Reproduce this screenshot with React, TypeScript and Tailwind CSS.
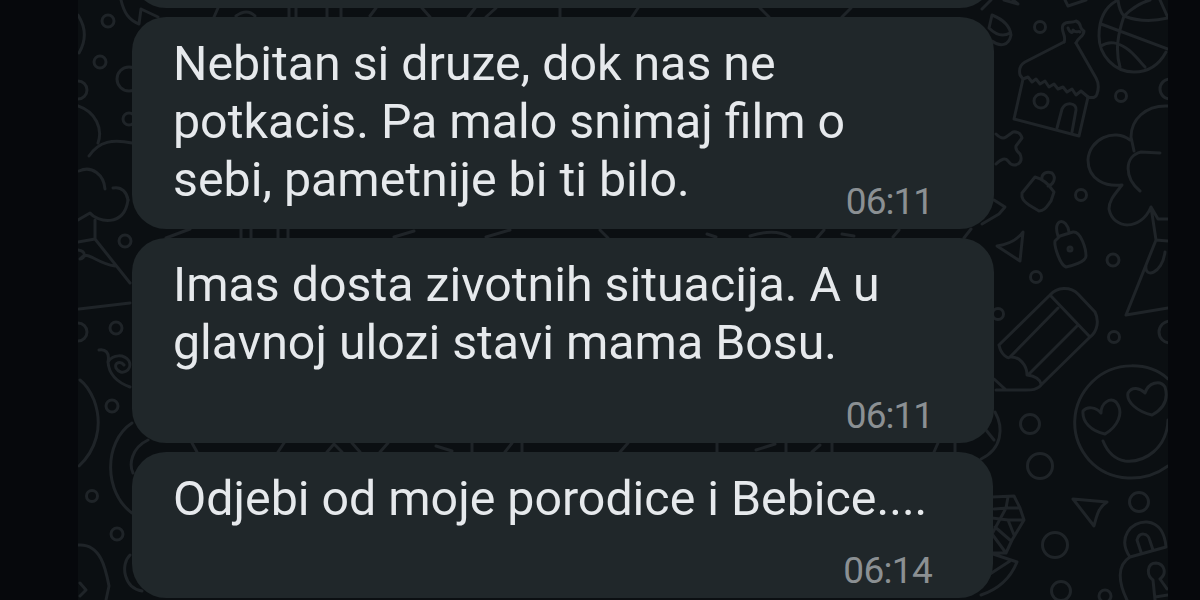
interface Message {
  id: number;
  lines: string[];
  time: string;
  sizeClass: string;
  timeClass: string;
}

const messages: Message[] = [
  {
    id: 1,
    lines: ["Nebitan si druze, dok nas ne", "potkacis. Pa malo snimaj film o", "sebi, pametnije bi ti bilo."],
    time: "06:11",
    sizeClass: "h-[212px] w-[862px]",
    timeClass: "tracking-[-1px]",
  },
  {
    id: 2,
    lines: ["Imas dosta zivotnih situacija. A u", "glavnoj ulozi stavi mama Bosu."],
    time: "06:11",
    sizeClass: "h-[205px] w-[862px]",
    timeClass: "tracking-[-1px]",
  },
  {
    id: 3,
    lines: ["Odjebi od moje porodice i Bebice...."],
    time: "06:14",
    sizeClass: "h-[146px] w-[861px]",
    timeClass: "tracking-[-0.7px]",
  },
];

// x, y, radius
const dots: [number, number, number][] = [
  [1040, 27, 5.5], [1121, 96, 5.5], [1081, 195, 5.5], [1113, 260, 6], [1036, 277, 5.5],
  [1114, 337, 5.5], [998, 314, 5.5], [1030, 424, 9.5], [1040, 466, 12.5], [1139, 502, 9.5],
  [1055, 545, 12.5], [1061, 591, 9.5], [1105, 596, 6], [1041, 101, 7], [1170, 89, 10],
  [1170, 332, 11], [108, 21, 6], [100, 62, 6], [78, 90, 9], [129, 79, 12], [129, 119, 6],
  [125, 241, 6], [116, 328, 6], [78, 332, 9], [112, 406, 6], [92, 496, 5.5], [117, 534, 6],
  [1070, 249, 2],
];

function Wallpaper() {
  return (
    <svg
      aria-hidden="true"
      viewBox="78 0 1090 600"
      className="absolute inset-0 h-full w-full"
      fill="none"
      stroke="#1f2428"
      strokeWidth="3"
      strokeLinecap="round"
      strokeLinejoin="round"
    >
      {dots.map(([x, y, r]) => (
        <circle key={`${x}-${y}`} cx={x} cy={y} r={r} />
      ))}

      {/* basketball */}
      <path d="M1166 52C1158 67 1146 72 1134 72C1114 72 1099 55 1099 36C1099 18 1106 6 1118 0M1160 0L1168 18C1152 22 1137 21 1124 16M1118 0C1119 8 1121 13 1124 16C1132 8 1140 3 1150 0M1101 24L1168 49M1124 16C1118 34 1115 50 1120 67M1101 46C1110 40 1118 43 1126 48C1134 53 1138 60 1145 67" />
      {/* house */}
      <path d="M1064 42L1025 62Q1018 66 1020 75L1023 79L1014 119L1079 136L1088 97Q1096 99 1097 94Q1100 85 1096 78L1076 43" />
      <path d="M1064 42C1067 36 1060 31 1063 25C1067 20 1071 24 1076 21C1083 24 1078 28 1084 31C1084 37 1078 37 1076 43M1068 28C1070 33 1073 34 1073 30C1076 34 1079 30 1080 32" />
      <path d="M1023 79L1028 77L1032 82L1036 79L1040 84L1045 81L1049 87L1054 84L1058 89L1063 87L1067 92L1072 89L1076 95L1081 91L1088 97M1057 128L1062 109C1066 101 1077 103 1076 110L1072 132" />
      {/* bell, scraps along the top */}
      <path d="M992 15C1002 19 1010 26 1011 35C1009 46 1000 47 992 41M992 15L989 28C996 35 1003 37 1010 33M982 9L991 0M1004 0L1018 4L1013 0M1065 0L1068 6L1086 0" />
      {/* cross */}
      <path d="M996 134Q1002 140 1006 137L1013 132Q1020 131 1022 138L1016 146Q1015 150 1020 154Q1023 161 1018 164Q1012 167 1008 161Q1004 156 996 164" />
      {/* padlocks */}
      <path d="M1035 177L1022 193C1021 199 1024 201 1029 205L1039 211C1045 211 1047 206 1051 201L1054 192C1050 186 1044 179 1035 177ZM1042 180C1041 173 1047 171 1052 173C1057 178 1053 185 1048 186" />
      <path d="M1060 236L1073 232C1081 231 1086 249 1086 256C1086 262 1071 266 1066 267C1060 265 1054 246 1055 241ZM1058 236C1052 218 1067 217 1069 232" />
      {/* tree and cone */}
      <path d="M1168 106C1145 105 1131 120 1131 137L1134 151M1130 140C1114 128 1089 139 1088 160C1088 180 1106 187 1122 185C1115 194 1109 200 1109 209C1113 230 1141 231 1151 207L1156 240L1126 315L1168 308M1140 191C1124 178 1124 156 1141 152L1160 153M1151 207L1158 219H1168M1156 240L1168 241M1146 266C1144 278 1162 275 1165 252" />
      {/* small arrows */}
      <path d="M997 246C1011 244 1018 239 1023 232L1020 261ZM1073 499L1107 502C1099 507 1097 514 1094 526Z" />
      <path d="M994 200L1005 207L999 214L982 224" />
      {/* pencil */}
      <path d="M999 345L1050 295C1057 287 1070 286 1078 294L1095 312C1099 320 1098 331 1090 337L1042 384C1037 391 1030 390 1022 390H996M999 345C1001 355 1008 359 1010 357C1019 356 1027 365 1027 375C1034 376 1040 379 1041 384M1010 357L1058 308M1029 374L1078 325M1050 295L1090 337M994 379L1005 389" />
      {/* heart-eyed face */}
      <path d="M1168 379C1150 362 1114 360 1092 382C1070 404 1069 437 1089 460C1110 483 1145 483 1168 466M1168 420C1167 448 1145 463 1125 461C1114 459 1107 451 1103 441" />
      <path d="M1105 434C1091 431 1082 422 1083 411C1087 406 1096 407 1101 413C1101 403 1110 397 1116 402C1125 413 1117 427 1105 434ZM1152 415C1138 412 1126 402 1128 393C1132 386 1140 388 1145 393C1148 383 1160 379 1165 387C1169 400 1163 409 1152 415Z" />
      {/* pineapple */}
      <path d="M992 497L1014 496L1020 508L1024 520L1012 540L1006 553L990 553M994 509L1008 508L1020 508M992 518L1008 520L1014 535M1022 520L1008 520M1008 497L1006 508L992 534L1006 553M995 527L1010 540M993 554L1017 562C1011 577 999 589 981 595M1010 561L990 574" />
      <path d="M995 412C1004 428 1002 449 981 459M994 440L986 430" />
      {/* robot */}
      <path d="M1130 557C1117 538 1131 521 1147 522C1160 523 1165 535 1166 547L1130 557C1117 565 1118 582 1127 600M1141 552L1137 540C1139 532 1148 532 1150 541L1153 550M1155 600L1153 580C1146 575 1147 563 1156 563C1165 564 1167 574 1160 579L1167 589M1155 597L1168 595" />

      {/* left margin */}
      <path d="M78 15C87 29 86 41 79 53M121 0C124 13 129 20 139 24L141 9L158 17M78 106C96 112 103 129 98 143M89 156C99 141 113 139 132 143M79 171C92 165 104 175 105 189M113 188C122 186 127 193 128 200" />
      <path d="M78 220L90 213C97 222 124 228 128 200M95 220V239L78 242M95 239L130 283M78 250C87 251 85 259 80 259C88 249 94 263 115 266M79 309L130 303" />
      <path d="M99 350C105 349 110 352 108 362C109 376 119 383 130 387M108 362C113 354 124 354 129 361C133 370 121 377 116 368C114 362 121 361 124 365M80 380Q88 386 94 400C104 427 95 451 79 466" />
      <path d="M132 423C103 442 104 493 132 513M148 440C131 448 129 465 133 473M78 545C101 543 106 570 109 586L106 600M80 583L86 590L80 596M130 555C120 565 124 588 142 591" />
      {/* pieces showing between bubbles */}
      <path d="M214 17L218 8M236 16Q247 8 255 16M289 8V17M296 8V17M327 8V17M341 8V17M370 16L376 8M422 8L430 17M468 17L475 8M486 17L496 8M560 8V17M632 17L638 8M760 8L769 17M842 17L851 8M166 238L190 229M241 229V238M251 229V238M278 229V238M288 229V238M394 237L414 231M486 237L510 230M600 230L608 238M707 234L716 237M750 236Q775 228 790 237M817 238L824 230M842 234L854 236M893 237L899 230M964 238L971 229" />
      <path d="M192 443L197 452M278 452L284 443M327 452L334 444L342 452M352 443L360 452M380 452L388 443M436 446L452 451M472 443V452M505 452L512 443M522 443V452M620 452L628 443M717 443V452M756 450L775 444M786 443V452M812 452L820 445M832 443V452M934 452L938 443M955 443V452" />
    </svg>
  );
}

function MessageBubble({ message }: { message: Message }) {
  return (
    <article
      className={`flex shrink-0 items-end rounded-[34px] bg-[#20272a] pr-[61px] pb-2 pl-[41px] ${message.sizeClass}`}
    >
      <p className="min-w-0 flex-1 self-start pt-[18px] text-[48.3px] leading-[58px] whitespace-nowrap text-[#e6e9ec]">
        {message.lines.map((line) => (
          <span key={line} className="block">
            {line}
          </span>
        ))}
      </p>
      <time className={`text-[37px] leading-[38px] text-[#8b9093] ${message.timeClass}`}>
        {message.time}
      </time>
    </article>
  );
}

export default function App() {
  return (
    <main className="flex h-[600px] w-[1200px] overflow-hidden bg-[#06080c] pl-[78px] font-['Roboto',sans-serif]">
      <div className="relative h-full w-[1090px] overflow-hidden bg-[#0b0f12]">
        <Wallpaper />
        <div className="relative -mt-20 flex flex-col gap-[9px] pl-[54px]">
          {/* tail end of the previous message */}
          <div className="h-[88px] w-[862px] shrink-0 rounded-[34px] bg-[#20272a]" />
          {messages.map((message) => (
            <MessageBubble key={message.id} message={message} />
          ))}
        </div>
      </div>
    </main>
  );
}
